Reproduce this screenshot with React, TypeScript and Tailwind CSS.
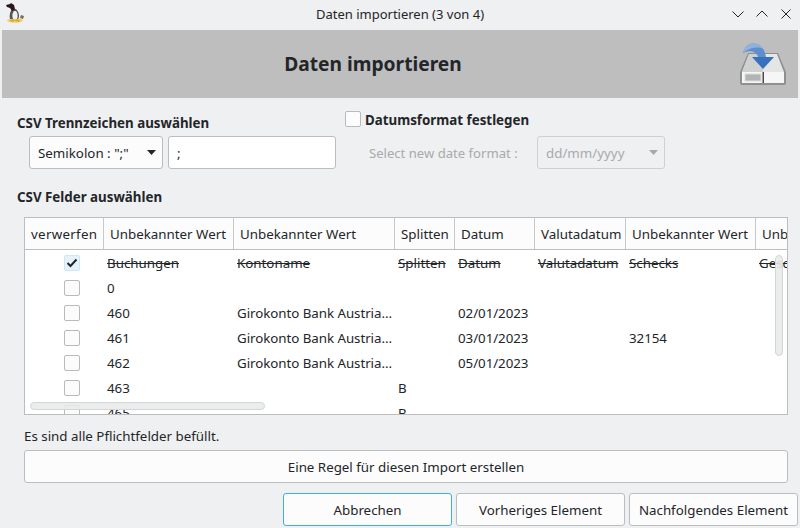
import React from "react";

const cols = [79, 130, 161, 60, 80, 91, 130, 60];
const heads = ["verwerfen", "Unbekannter Wert", "Unbekannter Wert", "Splitten", "Datum", "Valutadatum", "Unbekannter Wert", "Unbekannter Wert"];
const rows: string[][] = [
  ["Buchungen", "Kontoname", "Splitten", "Datum", "Valutadatum", "Schecks", "Geschäft"],
  ["0", "", "", "", "", "", ""],
  ["460", "Girokonto Bank Austria...", "", "02/01/2023", "", "", ""],
  ["461", "Girokonto Bank Austria...", "", "03/01/2023", "", "32154", ""],
  ["462", "Girokonto Bank Austria...", "", "05/01/2023", "", "", ""],
  ["463", "", "B", "", "", "", ""],
  ["465", "", "B", "", "", "", ""],
];

function Caret({ disabled }: { disabled?: boolean }) {
  return (
    <svg width="9" height="5" viewBox="0 0 9 5" className="shrink-0">
      <path d="M0 0h9L4.5 5z" fill={disabled ? "#a8a9aa" : "#232629"} />
    </svg>
  );
}

function Check({ checked }: { checked?: boolean }) {
  return (
    <div
      className={
        checked
          ? "w-4 h-4 rounded-[2px] border border-[#cfe6f5] bg-[#e6f2fb] flex items-center justify-center"
          : "w-4 h-4 rounded-[2px] border border-[#b9babb] bg-[#fcfcfc] flex items-center justify-center"
      }
    >
      {checked && (
        <svg width="12" height="10" viewBox="0 0 12 10">
          <path d="M1.5 5l3 3L10.5 1.5" fill="none" stroke="#232629" strokeWidth="2" />
        </svg>
      )}
    </div>
  );
}

function Penguin() {
  return (
    <svg width="24" height="24" viewBox="0 0 24 24">
      <ellipse cx="13" cy="20.5" rx="8" ry="2.2" fill="#e8cf7a" />
      <path d="M10 9c-2 3-3 6-2 10h8c2-2 1-7-2-10z" fill="#555" />
      <path d="M12 11c-2 2-2 5-1 8h4c1-2 1-6-1-8z" fill="#f0f0f0" />
      <path d="M4 5l4-1 1-1 3 2 1 4-3 2-2-3-3-1z" fill="#2c1418" />
      <path d="M19 15l3 1-1 3-3-1z" fill="#8a6a40" />
      <path d="M8 20l4-1 1 2-4 1zM14 19l4 1-1 2-4-1z" fill="#e0a820" />
    </svg>
  );
}

function ImportIcon() {
  return (
    <svg width="48" height="48" viewBox="0 0 48 48">
      <path d="M9 13h30l8 19v11a2 2 0 0 1-2 2H3a2 2 0 0 1-2-2V32z" fill="#8e8f8f" />
      <path d="M10 14h28l7 18H3z" fill="#e4e5e5" />
      <path d="M10 14h14v18H3z" fill="#cfd0d0" />
      <rect x="3" y="32" width="42" height="11" fill="#f6f6f6" />
      <rect x="6" y="34" width="16" height="7" fill="#b2b3b3" stroke="#dcdcdc" />
      <rect x="23.5" y="32" width="1.5" height="11" fill="#4a4a4a" />
      <path d="M13 17h22L24 29z" fill="#3a71bd" />
      <path d="M4 13C6 5 12 2 18 4c5 2 8 6 9 13H19c-1-5-7-8-15-4z" fill="#5d8fce" />
      <path d="M4 13C6 5 12 2 18 4c3 1 5 3 6 5-6-3-14-1-20 4z" fill="#8fb2de" />
    </svg>
  );
}

export default function App() {
  const font = { fontFamily: '"Noto Sans", sans-serif' };
  return (
    <div style={font} className="w-[800px] h-[528px] bg-[#eff0f1] text-[#232629] text-[13.33px] leading-[18px] flex flex-col overflow-hidden">
      <div className="h-[30px] shrink-0 flex items-center relative">
        <div className="absolute left-[2px] top-0"><Penguin /></div>
        <div className="flex-1 text-center -mt-[2px] text-[13px]">Daten importieren (3 von 4)</div>
        <div className="absolute right-[2px] top-[4px] flex gap-0">
          <svg width="24" height="20" viewBox="0 0 24 20"><path d="M6.5 7.5l5.5 5.5 5.5-5.5" fill="none" stroke="#232629" /></svg>
          <svg width="24" height="20" viewBox="0 0 24 20"><path d="M6.5 12.5l5.5-5.5 5.5 5.5" fill="none" stroke="#232629" /></svg>
          <svg width="24" height="20" viewBox="0 0 24 20"><path d="M7.5 5.5l9 9M16.5 5.5l-9 9" fill="none" stroke="#232629" /></svg>
        </div>
      </div>

      <div className="mx-[2px] h-[68px] shrink-0 bg-[#bebebe] flex items-center relative">
        <div className="flex-1 text-center font-bold text-[19.2px] leading-[28px] pr-[54px]">Daten importieren</div>
        <div className="absolute right-[11px] top-[10px]"><ImportIcon /></div>
      </div>

      <div className="flex pl-[17px] pt-[12px] h-[71px] shrink-0">
        <div className="w-[328px] shrink-0">
          <div className="font-bold h-[26px] pt-[4px]">CSV Trennzeichen auswählen</div>
          <div className="flex pl-[12px] gap-[5px]">
            <div className="w-[134px] h-[33px] rounded-[3px] border border-[#bcbdbe] bg-[#fcfcfc] flex items-center justify-between pl-[8px] pr-[6px]">
              <span>Semikolon : ";"</span>
              <Caret />
            </div>
            <div className="w-[168px] h-[33px] rounded-[3px] border border-[#bcbdbe] bg-white flex items-center pl-[8px]">;</div>
          </div>
        </div>
        <div className="flex-1">
          <div className="flex items-center gap-[4px] h-[18px] font-bold">
            <Check />
            <span className="pt-[2px]">Datumsformat festlegen</span>
          </div>
          <div className="flex items-center mt-[8px] pl-[24px] text-[#a9aaab]">
            <div className="w-[168px] text-[13.1px]">Select new date format :</div>
            <div className="w-[128px] h-[33px] rounded-[3px] border border-[#cfd0d1] flex items-center justify-between pl-[8px] pr-[6px]">
              <span>dd/mm/yyyy</span>
              <Caret disabled />
            </div>
          </div>
        </div>
      </div>

      <div className="pl-[17px] mt-[18px] h-[18px] pt-[1px] font-bold shrink-0">CSV Felder auswählen</div>

      <div className="ml-[24px] mr-[12px] mt-[12px] h-[198px] shrink-0 border border-[#bcbdbe] bg-white overflow-hidden relative">
        <div className="flex h-[32px] bg-[#fcfcfc] border-b border-[#bcbdbe]">
          {heads.map((h, i) => (
            <div
              key={i}
              style={{ width: cols[i] }}
              className={
                i === 0
                  ? "shrink-0 h-full border-r border-[#c8c9ca] flex items-center pl-[6px] whitespace-nowrap overflow-hidden tracking-[0.3px]"
                  : "shrink-0 h-full border-r border-[#c8c9ca] flex items-center pl-[6px] whitespace-nowrap overflow-hidden"
              }
            >
              {h}
            </div>
          ))}
        </div>
        {rows.map((r, ri) => (
          <div key={ri} className="flex h-[25px] items-center">
            <div style={{ width: cols[0] }} className="shrink-0 flex justify-center pl-[15px]">
              <Check checked={ri === 0} />
            </div>
            {r.map((c, ci) => (
              <div
                key={ci}
                style={{ width: cols[ci + 1] }}
                className={
                  ri === 0
                    ? "shrink-0 pl-[3px] whitespace-nowrap overflow-hidden line-through"
                    : "shrink-0 pl-[3px] whitespace-nowrap overflow-hidden tracking-[-0.05px]"
                }
              >
                {c}
              </div>
            ))}
          </div>
        ))}
        <div className="absolute left-[5px] top-[184px] w-[235px] h-[8px] rounded-full bg-[#e9eaea]/90 border border-[#d4d5d6]" />
        <div className="absolute left-[750px] top-[37px] w-[8px] h-[101px] rounded-full bg-[#e9eaea]/90 border border-[#d4d5d6]" />
      </div>

      <div className="pl-[24px] mt-[12px] h-[18px] shrink-0">Es sind alle Pflichtfelder befüllt.</div>

      <div className="ml-[24px] mr-[12px] mt-[5px] h-[33px] shrink-0 rounded-[3px] border border-[#bcbdbe] bg-[#fcfcfc] flex items-center justify-center">
        Eine Regel für diesen Import erstellen
      </div>

      <div className="flex justify-end gap-[4px] pr-[2px] mt-[10px]">
        <div className="w-[169px] h-[33px] rounded-[3px] border border-[#3daee9] bg-[#fcfcfc] flex items-center justify-center">Abbrechen</div>
        <div className="w-[169px] h-[33px] rounded-[3px] border border-[#bcbdbe] bg-[#fcfcfc] flex items-center justify-center">Vorheriges Element</div>
        <div className="w-[169px] h-[33px] rounded-[3px] border border-[#bcbdbe] bg-[#fcfcfc] flex items-center justify-center">Nachfolgendes Element</div>
      </div>
    </div>
  );
}
